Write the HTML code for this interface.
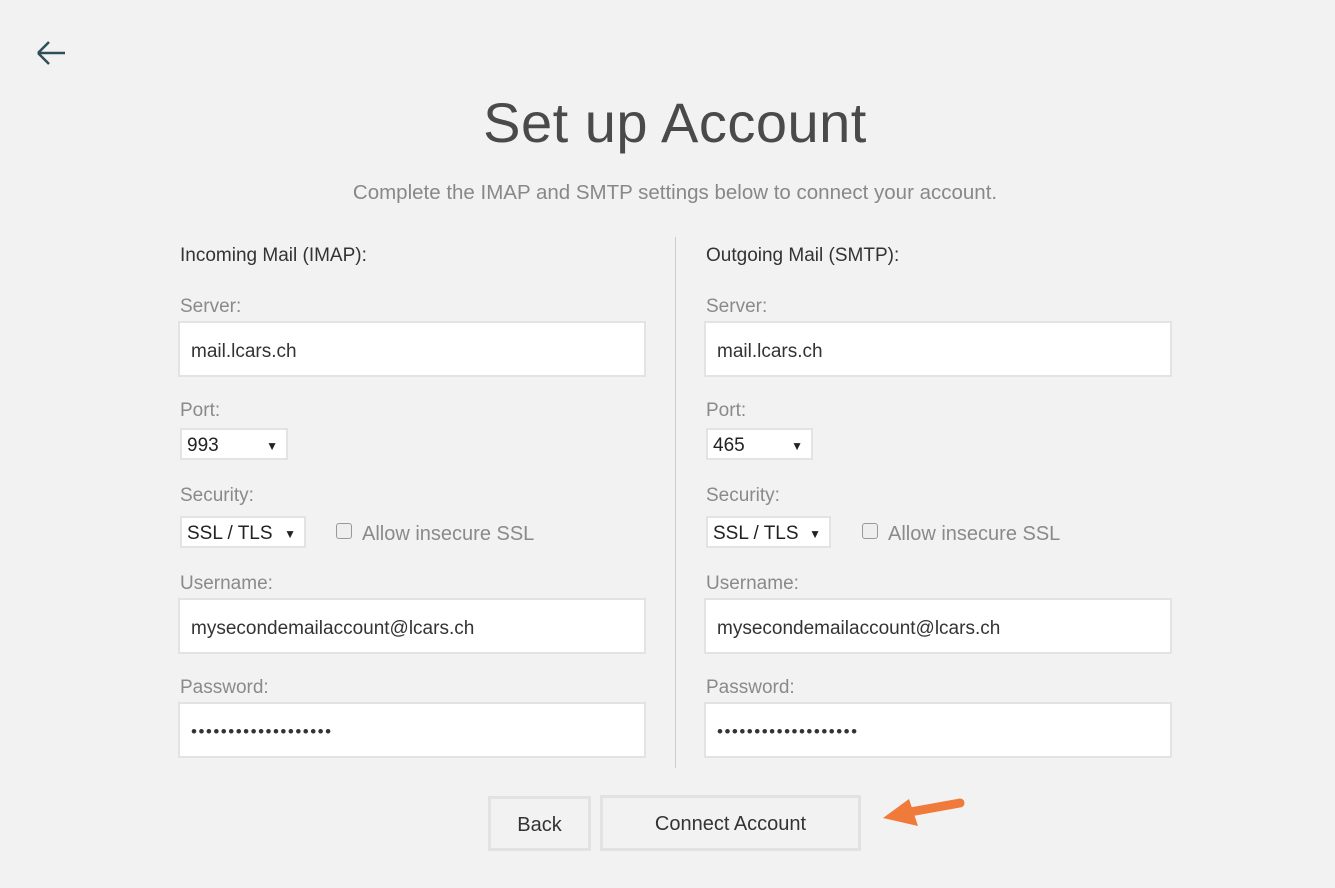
<!DOCTYPE html>
<html><head><meta charset="utf-8"><style>
body{margin:0;width:1335px;height:888px;background:#f2f2f2;font-family:"Liberation Sans",sans-serif;position:relative;overflow:hidden}
.a{position:absolute;white-space:nowrap}
.lbl{font-size:19px;color:#8a8a8a}
.hd{font-size:19px;color:#333}
.inp{position:absolute;background:#fff;border:2px solid #e3e3e3;box-sizing:border-box;font-size:19px;color:#333;padding-left:11px;padding-top:5px;display:flex;align-items:center}
.sel{position:absolute;background:#fff;border:2px solid #e3e3e3;box-sizing:border-box;font-size:19px;color:#222;padding-left:5px;padding-top:4px;display:flex;align-items:center}
.sel span{position:absolute;right:8px;font-size:12px}
.cb{position:absolute;width:14px;height:14px;border:1px solid #999;border-radius:3px;background:#eee}
.btn{position:absolute;border:3px solid #e2e2e2;box-sizing:border-box;font-size:20px;color:#333;display:flex;align-items:center;justify-content:center;background:#f2f2f2;padding-top:3px}
.pw{font-size:17px;letter-spacing:1.5px;padding-top:4px}
</style></head><body>
<svg class="a" style="left:36px;top:40px" width="30" height="26" viewBox="0 0 30 26"><path d="M2 13H29M2 13L13 2M2 13L13 24" stroke="#2f4f58" stroke-width="2.5" fill="none"/></svg>
<div class="a" style="left:0;width:1350px;text-align:center;top:90px;font-size:56px;color:#4a4a4a;font-weight:300;letter-spacing:0.5px">Set up Account</div>
<div class="a" style="left:0;width:1350px;text-align:center;top:181px;font-size:20.5px;color:#888">Complete the IMAP and SMTP settings below to connect your account.</div>
<div class="a" style="left:675px;top:237px;width:1px;height:531px;background:#ccc"></div>

<div class="a hd" style="left:180px;top:245px">Incoming Mail (IMAP):</div>
<div class="a lbl" style="left:180px;top:296px">Server:</div>
<div class="inp" style="left:178px;top:321px;width:468px;height:56px">mail.lcars.ch</div>
<div class="a lbl" style="left:180px;top:400px">Port:</div>
<div class="sel" style="left:180px;top:428px;width:108px;height:32px">993<span>▼</span></div>
<div class="a lbl" style="left:180px;top:485px">Security:</div>
<div class="sel" style="left:180px;top:516px;width:126px;height:32px">SSL / TLS<span>▼</span></div>
<div class="cb" style="left:336px;top:523px"></div>
<div class="a lbl" style="left:362px;top:523px;font-size:20px">Allow insecure SSL</div>
<div class="a lbl" style="left:180px;top:573px">Username:</div>
<div class="inp" style="left:178px;top:598px;width:468px;height:56px">mysecondemailaccount@lcars.ch</div>
<div class="a lbl" style="left:180px;top:677px">Password:</div>
<div class="inp pw" style="left:178px;top:702px;width:468px;height:56px">•••••••••••••••••••</div>

<div class="a hd" style="left:706px;top:245px">Outgoing Mail (SMTP):</div>
<div class="a lbl" style="left:706px;top:296px">Server:</div>
<div class="inp" style="left:704px;top:321px;width:468px;height:56px">mail.lcars.ch</div>
<div class="a lbl" style="left:706px;top:400px">Port:</div>
<div class="sel" style="left:706px;top:428px;width:107px;height:32px">465<span>▼</span></div>
<div class="a lbl" style="left:706px;top:485px">Security:</div>
<div class="sel" style="left:706px;top:516px;width:125px;height:32px">SSL / TLS<span>▼</span></div>
<div class="cb" style="left:862px;top:523px"></div>
<div class="a lbl" style="left:888px;top:523px;font-size:20px">Allow insecure SSL</div>
<div class="a lbl" style="left:706px;top:573px">Username:</div>
<div class="inp" style="left:704px;top:598px;width:468px;height:56px">mysecondemailaccount@lcars.ch</div>
<div class="a lbl" style="left:706px;top:677px">Password:</div>
<div class="inp pw" style="left:704px;top:702px;width:468px;height:56px">•••••••••••••••••••</div>

<div class="btn" style="left:488px;top:796px;width:103px;height:55px">Back</div>
<div class="btn" style="left:600px;top:795px;width:261px;height:56px">Connect Account</div>
<svg class="a" style="left:880px;top:795px" width="90" height="40" viewBox="0 0 90 40"><path d="M80 8L30 17" stroke="#f07a3a" stroke-width="9" stroke-linecap="round" fill="none"/><path d="M3 23L29 4L38 31Z" fill="#f07a3a"/></svg>
</body></html>
